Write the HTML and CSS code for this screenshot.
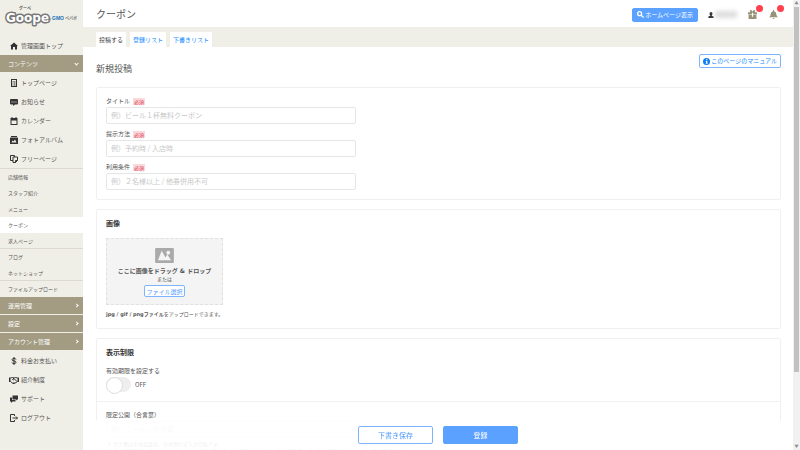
FILE: index.html
```
<!DOCTYPE html>
<html lang="ja">
<head>
    <meta charset="UTF-8">
    <meta name="viewport" content="width=device-width, initial-scale=1.0">
    <title>クーポン</title>
    <link rel="stylesheet" href="styles.css">
</head>
<body>
    <nav class="sidebar">
        <a href="#" class="logo" aria-label="Goope">
            <svg width="72" height="20" viewBox="0 0 72 20">
                <text x="0" y="15" class="logo-name">Goope</text>
                <text x="13" y="3" class="logo-kana">グーペ</text>
                <text x="42" y="13" class="logo-by">by</text>
                <text x="46" y="13" class="logo-gmo">GMO</text>
                <text x="59" y="13" class="logo-pepabo">ペパボ</text>
            </svg>
        </a>
        <a href="#" class="nav-item">
            <svg class="icon" viewBox="0 0 16 16"><path d="M8 1 0 8h2v7h4v-5h4v5h4V8h2z"/></svg>
            管理画面トップ
        </a>
        <button class="nav-group">コンテンツ<span class="caret caret-down"></span></button>
        <a href="#" class="nav-item">
            <svg class="icon" viewBox="0 0 16 16"><path fill-rule="evenodd" d="M2 0h12v16H2zM4 2v12h8V2zM5 4h6v1H5zM5 7h2v2H5zM8 7h3v2H8zM5 11h2v2H5zM8 11h3v2H8z"/></svg>
            トップページ
        </a>
        <a href="#" class="nav-item">
            <svg class="icon" viewBox="0 0 16 16"><path fill-rule="evenodd" d="M2 2h12q2 0 2 2v7q0 2-2 2h-4l-4 3v-3H2q-2 0-2-2V4q0-2 2-2zM3 7v2h2V7zM7 7v2h2V7zM11 7v2h2V7z"/></svg>
            お知らせ
        </a>
        <a href="#" class="nav-item">
            <svg class="icon" viewBox="0 0 16 16"><path fill-rule="evenodd" d="M3 0h2v2h6V0h2v2h2v14H1V2h2zM3 7v7h10V7z"/></svg>
            カレンダー
        </a>
        <a href="#" class="nav-item">
            <svg class="icon" viewBox="0 0 16 16"><path fill-rule="evenodd" d="M2 0h12v2H2zM1 3h14q1 0 1 1v11q0 1-1 1H1q-1 0-1-1V4q0-1 1-1zM3 13h10l-3-6-3 4-2-2z"/></svg>
            フォトアルバム
        </a>
        <a href="#" class="nav-item">
            <svg class="icon icon-line" viewBox="0 0 16 16"><path d="M9 4V1H1v10h5M6 4h9v7l-4 4H6zM11 15v-4h4"/></svg>
            フリーページ
        </a>
        <div class="submenu">
            <ul class="subnav">
                <li><a href="#">店舗情報</a></li>
                <li><a href="#">スタッフ紹介</a></li>
                <li><a href="#">メニュー</a></li>
                <li><a href="#" class="current">クーポン</a></li>
                <li><a href="#">求人ページ</a></li>
            </ul>
            <ul class="subnav">
                <li><a href="#">ブログ</a></li>
                <li><a href="#">ネットショップ</a></li>
            </ul>
            <ul class="subnav">
                <li><a href="#">ファイルアップロード</a></li>
            </ul>
        </div>
        <button class="nav-group">運用管理<span class="caret"></span></button>
        <button class="nav-group">設定<span class="caret"></span></button>
        <button class="nav-group">アカウント管理<span class="caret"></span></button>
        <a href="#" class="nav-item">
            <svg class="icon icon-line" viewBox="0 0 16 16"><path d="M12 5Q12 3 8 3T4 5.500Q4 8 8 8t4 2.500Q12 13 8 13t-4-2M8 0v16"/></svg>
            料金お支払い
        </a>
        <a href="#" class="nav-item">
            <svg class="icon icon-wide" viewBox="0 0 20 16"><path d="M0 3h3v9H0zM17 3h3v9h-3z"/><path class="stroke" d="M3 4l4-1 3 1 3-1 4 1M3 11l5 4h3l6-4M10 4 7 7q2 2 4-1l5 5M9 12l2 2"/></svg>
            紹介制度
        </a>
        <a href="#" class="nav-item">
            <svg class="icon" viewBox="0 0 16 16"><path d="M5 1h11v8h-2v2l-2-2H5zM0 5h4v5h7v3H5l-3 3v-3H0z"/></svg>
            サポート
        </a>
        <a href="#" class="nav-item">
            <svg class="icon icon-line" viewBox="0 0 16 16"><path d="M9 4V1H1v14h8v-3M5 8h10M12 5l3 3-3 3"/></svg>
            ログアウト
        </a>
    </nav>

    <div class="page">
        <header class="header">
            <h1>クーポン</h1>
            <a href="#" class="btn btn-home">
                <svg class="icon-search" viewBox="0 0 16 16"><circle cx="6" cy="6" r="4.500"/><path d="m10 10 5 5"/></svg>
                ホームページ表示
            </a>
            <div class="user">
                <svg viewBox="0 0 16 16"><path d="M8 0q4 0 4 4 0 3-2 5v1l5 2v4H1v-4l5-2V9Q4 7 4 4q0-4 4-4z"/></svg>
                <span class="user-name"></span>
            </div>
            <button class="notice" aria-label="プレゼント">
                <svg viewBox="0 0 16 16"><path d="M0 4h4Q2 0 5 0q2 0 3 3 1-3 3-3 3 0 1 4h4v4H9V5H7v3H0zM1 9h6v3h2V9h6v7H1z"/></svg>
                <span class="badge"></span>
            </button>
            <button class="notice" aria-label="お知らせ">
                <svg viewBox="0 0 16 16"><path d="M7 0h2v2q4 1 4 5 0 4 3 6H0q3-2 3-6 0-4 4-5zM6 14h4q-2 4-4 0z"/></svg>
                <span class="badge"></span>
            </button>
        </header>

        <div class="tabs">
            <a href="#" class="tab active">投稿する</a>
            <a href="#" class="tab">登録リスト</a>
            <a href="#" class="tab">下書きリスト</a>
        </div>

        <main class="content">
            <div class="content-head">
                <h2>新規投稿</h2>
                <a href="#" class="btn btn-manual">
                    <svg viewBox="0 0 16 16"><circle cx="8" cy="8" r="8"/><path d="M7 3h3v2H7zM6 7h4v5h1v1H6v-1h1V8H6z"/></svg>
                    このページのマニュアル
                </a>
            </div>

            <section class="card card-form">
                <div class="field">
                    <label for="title">タイトル <span class="required">必須</span></label>
                    <input type="text" id="title" placeholder="例）ビール１杯無料クーポン">
                </div>
                <div class="field">
                    <label for="method">提示方法 <span class="required">必須</span></label>
                    <input type="text" id="method" placeholder="例）予約時 / 入店時">
                </div>
                <div class="field">
                    <label for="terms">利用条件 <span class="required">必須</span></label>
                    <input type="text" id="terms" placeholder="例）２名様以上 / 他券併用不可">
                </div>
            </section>

            <section class="card card-image">
                <h3>画像</h3>
                <div class="dropzone">
                    <svg viewBox="0 0 20 16"><path fill-rule="evenodd" d="M1 0h18q1 0 1 1v14q0 1-1 1H1q-1 0-1-1V1q0-1 1-1zM3 13h14l-4-6-2 3-4-7zM14 3a2 2 0 1 0 .01 0z"/></svg>
                    <strong>ここに画像をドラッグ &amp; ドロップ</strong>
                    <span>または</span>
                    <button class="btn btn-file">ファイル選択</button>
                </div>
                <p><b>jpg / gif / pngファイル</b>をアップロードできます。</p>
            </section>

            <section class="card card-limit">
                <div class="limit-period">
                    <h3>表示制限</h3>
                    <label for="period">有効期限を設定する</label>
                    <div class="switch">
                        <input type="checkbox" id="period">
                        <span>OFF</span>
                    </div>
                </div>
                <div class="limit-secret">
                    <label for="secret">限定公開（合言葉）</label>
                    <input type="text" id="secret" placeholder="例）クーポン合言葉">
                    <ol>
                        <li>合言葉は半角英数字、全角問わず入力可能です。</li>
                        <li>合言葉を設定すると、クーポンページで合言葉の入力が必要になります。合言葉を知っているお客様だけにクーポンを公開できます。</li>
                    </ol>
                </div>
            </section>
        </main>

        <footer class="actions">
            <button class="btn btn-draft">下書き保存</button>
            <button class="btn btn-submit">登録</button>
        </footer>
    </div>

    <div class="scrollbar">
        <span class="arrow">▲</span>
        <div class="thumb"></div>
        <span class="arrow arrow-down">▼</span>
    </div>
</body>
</html>
```
FILE: styles.css
```
* {
    box-sizing: border-box;
}
body {
    display: grid;
    grid-template-columns: 83px 1fr 7px;
    height: 100vh;
    margin: 0;
    overflow: hidden;
    background: #fff;
    color: #555;
    font-family: "Noto Sans CJK JP", sans-serif;
    font-size: 6px;
    line-height: 10px;
}
h1, h2, h3, p, ul, ol {
    margin: 0;
    padding: 0;
    font-weight: normal;
}
a {
    color: inherit;
    text-decoration: none;
}
button, input {
    font-family: inherit;
    font-size: 6px;
    color: inherit;
}
button {
    cursor: pointer;
}
svg {
    display: block;
    flex: none;
}

/* sidebar */
.sidebar {
    background: #f0efe7;
    overflow: hidden;
}
.logo {
    display: block;
    padding: 7px 6px 0;
    height: 36px;
}
.logo svg {
    overflow: visible;
}
.logo-name {
    font: bold 12px "DejaVu Sans", sans-serif;
    fill: #fff;
    stroke: #777;
    stroke-width: 3;
    stroke-linejoin: round;
    paint-order: stroke;
}
.logo-kana {
    font-family: "DejaVu Sans", "Noto Sans CJK JP", sans-serif;
    font-size: 4px;
    font-weight: bold;
    fill: #555;
}
.logo-by {
    font-size: 3px;
    fill: #777;
}
.logo-gmo {
    font: bold 5px "Liberation Sans", sans-serif;
    fill: #1672b8;
}
.logo-pepabo {
    font-size: 4px;
    font-weight: bold;
    fill: #777;
}
.nav-item {
    display: flex;
    align-items: center;
    gap: 3px;
    height: 19px;
    padding-left: 10px;
}
.icon {
    width: 8px;
    height: 8px;
    fill: #333;
}
.icon-line {
    fill: none;
    stroke: #333;
    stroke-width: 2;
}
.icon-wide {
    width: 12px;
    height: 8px;
    margin: 0 -2px;
}
.icon-wide .stroke {
    fill: none;
    stroke: #333;
    stroke-width: 2;
}
.nav-group {
    display: flex;
    align-items: center;
    justify-content: space-between;
    width: 100%;
    height: 18px;
    padding: 0 5px 0 8px;
    border: 0;
    border-bottom: 1px solid #f0efe7;
    background: #a39c82;
    color: #fff;
}
.caret {
    width: 3px;
    height: 3px;
    border-top: 1px solid #fff;
    border-right: 1px solid #fff;
    transform: rotate(45deg);
}
.caret-down {
    transform: rotate(135deg);
}
.subnav {
    border-top: 1px solid #dcdad0;
    font-size: 5px;
    list-style: none;
}
.subnav + .subnav {
    margin-top: -1px;
}
.subnav a {
    display: block;
    padding-left: 8px;
    line-height: 16px;
}
.subnav .current {
    background: #fff;
}

/* header */
.page {
    min-width: 0;
    overflow: hidden;
}
.header {
    display: flex;
    align-items: center;
    height: 27px;
    padding: 2px 10px 0 13px;
}
.header h1 {
    flex: 1;
    padding-bottom: 2px;
    font-size: 10px;
}
.btn {
    display: flex;
    align-items: center;
    justify-content: center;
    gap: 1px;
    border: 1px solid #7db4ff;
    border-radius: 2px;
    background: #fff;
    color: #4c98ff;
}
.btn-home {
    height: 14px;
    padding: 0 4px;
    border-color: #5ba1ff;
    background: #5ba1ff;
    color: #fff;
}
.icon-search {
    width: 7px;
    height: 7px;
    fill: none;
    stroke: #fff;
    stroke-width: 3;
}
.user {
    display: flex;
    align-items: center;
    gap: 1px;
    margin: 0 4px 0 10px;
}
.user svg {
    width: 6px;
    height: 6px;
    fill: #333;
}
.user-name {
    width: 22px;
    height: 7px;
    background: #ddd;
    filter: blur(2px);
}
.notice {
    position: relative;
    margin-left: 2px;
    padding: 0 5px;
    border: 0;
    background: none;
}
.notice svg {
    width: 9px;
    height: 9px;
    fill: #99927a;
}
.badge {
    position: absolute;
    top: -5px;
    right: -1px;
    width: 7px;
    height: 7px;
    border-radius: 50%;
    background: #ff414d;
}
.tabs {
    display: flex;
    align-items: flex-end;
    gap: 4px;
    height: 20px;
    padding-left: 13px;
    background: #f0efe7;
}
.tab {
    padding: 0 3px;
    border-radius: 1px 1px 0 0;
    background: #fff;
    color: #168cff;
    line-height: 15px;
}
.tab.active {
    color: #444;
}

/* content */
.content {
    padding: 7px 12px 0 13px;
}
.content-head {
    display: flex;
    justify-content: space-between;
    height: 33px;
}
.content-head h2 {
    padding-top: 10px;
    font-size: 9px;
}
.btn-manual {
    height: 14px;
    padding: 0 3px;
    color: #168cff;
}
.btn-manual svg {
    width: 7px;
    height: 7px;
    fill: #0d7df2;
}
.btn-manual path {
    fill: #fff;
}
.card {
    margin-bottom: 9px;
    border: 1px solid #f0f0f0;
    border-radius: 2px;
}
.card-form {
    padding: 8px 9px 9px;
}
.field {
    margin-bottom: 5px;
}
.field:last-child {
    margin-bottom: 0;
}
.field label {
    display: flex;
    align-items: center;
    gap: 3px;
    margin-bottom: 1px;
}
.required {
    padding: 0 1px;
    background: #fbd9dc;
    color: #e0404d;
    font-size: 5px;
    line-height: 7px;
}
input[type="text"] {
    display: block;
    width: 250px;
    max-width: 100%;
    height: 17px;
    padding: 0 4px 2px;
    border: 1px solid #e6e6e6;
    border-radius: 2px;
    background: #fff;
    font-size: 7px;
}
input::placeholder {
    color: #c8c8c8;
}
.card h3 {
    font-size: 7px;
    font-weight: bold;
    color: #333;
}
.card-image {
    padding: 8px 9px 9px;
}
.dropzone {
    display: flex;
    flex-direction: column;
    align-items: center;
    width: 117px;
    margin: 10px 0 4px;
    padding: 9px 0 7px;
    border: 1px dashed #e0e0e0;
    background: #f4f4f4;
}
.dropzone svg {
    width: 19px;
    height: 15px;
    margin-bottom: 4px;
    fill: #aaa;
}
.dropzone strong {
    font-family: "DejaVu Sans", "Noto Sans CJK JP", sans-serif;
    line-height: 8px;
}
.dropzone span {
    font-size: 5px;
    line-height: 7px;
}
.btn-file {
    height: 12px;
    margin-top: 3px;
    padding: 0 1px;
}
.card-image p {
    font-family: "DejaVu Sans", "Noto Sans CJK JP", sans-serif;
    font-size: 5px;
}
.limit-period {
    padding: 8px 9px 9px;
    border-bottom: 1px solid #f0f0f0;
}
.limit-period label {
    display: block;
    margin: 9px 0 1px;
}
.switch {
    display: flex;
    align-items: center;
    gap: 4px;
}
.switch input {
    appearance: none;
    width: 25px;
    height: 15px;
    margin: 0;
    border-radius: 8px;
    background: #eee;
}
.switch input::before {
    content: "";
    display: block;
    width: 15px;
    height: 15px;
    border: 1px solid #ddd;
    border-radius: 50%;
    background: #fff;
}
.switch input:checked {
    background: #5ba1ff;
}
.switch input:checked::before {
    margin-left: 10px;
}
.limit-secret {
    padding: 8px 9px;
}
.limit-secret label {
    display: block;
    margin-bottom: 1px;
}
.limit-secret ol {
    padding: 2px 0 0 7px;
    font-size: 5px;
    line-height: 7px;
}

/* bottom bar */
.actions {
    position: fixed;
    right: 7px;
    bottom: 0;
    left: 83px;
    display: flex;
    align-items: center;
    justify-content: center;
    gap: 10px;
    height: 30px;
    background: rgba(255, 255, 255, 0.9);
}
.actions .btn {
    width: 75px;
    height: 18px;
    font-size: 7px;
}
.actions .btn-submit {
    border-color: #5ba1ff;
    background: #5ba1ff;
    color: #fff;
}

/* scroll track */
.scrollbar {
    display: flex;
    flex-direction: column;
    align-items: center;
    background: #f1f1f1;
}
.arrow {
    color: #888;
    font-size: 4px;
    line-height: 7px;
}
.arrow-down {
    margin-top: auto;
}
.thumb {
    width: 5px;
    height: 81%;
    background: #c1c1c1;
}
```
